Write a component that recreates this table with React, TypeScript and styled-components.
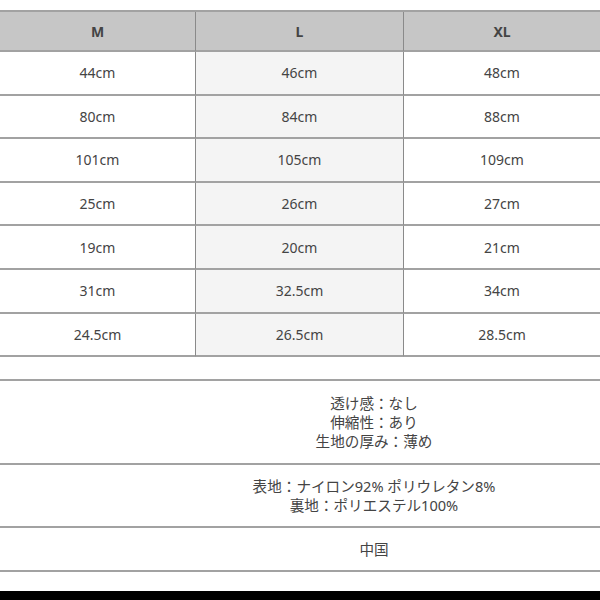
import styled, { createGlobalStyle } from 'styled-components'

const GlobalStyle = createGlobalStyle`
  html, body {
    margin: 0;
    padding: 0;
    background: #ffffff;
  }
  body {
    font-family: 'Noto Sans', 'Noto Sans CJK JP', sans-serif;
    color: #444;
  }
`

const Page = styled.div`
  width: 600px;
  height: 600px;
  display: flex;
  flex-direction: column;
  padding-top: 10px;
  box-sizing: border-box;
  overflow: hidden;
`

const SizeTable = styled.div`
  display: grid;
  grid-template-columns: 196px 208px 196px;
  border-top: 2px solid #a2a2a2;
`

const HeadCell = styled.div<{ $last?: boolean }>`
  height: 38px;
  display: flex;
  align-items: center;
  justify-content: center;
  background: #c6c6c6;
  border-bottom: 2px solid #a2a2a2;
  border-right: ${p => (p.$last ? 'none' : '1px solid #8a8a8a')};
  font-size: 14px;
  font-weight: 700;
  color: #444;
`

const Cell = styled.div<{ $shade?: boolean; $last?: boolean }>`
  height: 41.6px;
  display: flex;
  align-items: center;
  justify-content: center;
  background: ${p => (p.$shade ? '#f4f4f4' : '#ffffff')};
  border-bottom: 2px solid #a2a2a2;
  border-right: ${p => (p.$last ? 'none' : '1px solid #8a8a8a')};
  font-size: 14px;
  color: #444;
`

const Spacer = styled.div`
  height: 22px;
`

const InfoTable = styled.div`
  display: flex;
  flex-direction: column;
  border-top: 2px solid #a2a2a2;
`

const InfoRow = styled.div<{ $h: number }>`
  display: grid;
  grid-template-columns: 148px 1fr;
  height: ${p => p.$h}px;
  border-bottom: 2px solid #a2a2a2;
  box-sizing: border-box;
`

const InfoValue = styled.div`
  grid-column: 2;
  display: flex;
  flex-direction: column;
  align-items: center;
  justify-content: center;
  font-size: 14.6px;
  line-height: 19px;
  color: #444;
`

const BlackBar = styled.div`
  margin-top: auto;
  height: 9px;
  background: #000;
`

const sizes = ['M', 'L', 'XL']

const rows = [
  ['44cm', '46cm', '48cm'],
  ['80cm', '84cm', '88cm'],
  ['101cm', '105cm', '109cm'],
  ['25cm', '26cm', '27cm'],
  ['19cm', '20cm', '21cm'],
  ['31cm', '32.5cm', '34cm'],
  ['24.5cm', '26.5cm', '28.5cm'],
]

const info = [
  { h: 84, lines: ['透け感：なし', '伸縮性：あり', '生地の厚み：薄め'] },
  { h: 63, lines: ['表地：ナイロン92% ポリウレタン8%', '裏地：ポリエステル100%'] },
  { h: 44, lines: ['中国'] },
]

function App() {
  return (
    <>
      <GlobalStyle />
      <Page>
        <SizeTable>
          {sizes.map((s, i) => (
            <HeadCell key={s} $last={i === 2}>{s}</HeadCell>
          ))}
          {rows.map((r, ri) =>
            r.map((v, ci) => (
              <Cell key={`${ri}-${ci}`} $shade={ci === 1} $last={ci === 2}>
                {v}
              </Cell>
            ))
          )}
        </SizeTable>
        <Spacer />
        <InfoTable>
          {info.map((b, i) => (
            <InfoRow key={i} $h={b.h}>
              <InfoValue>
                {b.lines.map(l => (
                  <span key={l}>{l}</span>
                ))}
              </InfoValue>
            </InfoRow>
          ))}
        </InfoTable>
        <BlackBar />
      </Page>
    </>
  )
}

export default App
